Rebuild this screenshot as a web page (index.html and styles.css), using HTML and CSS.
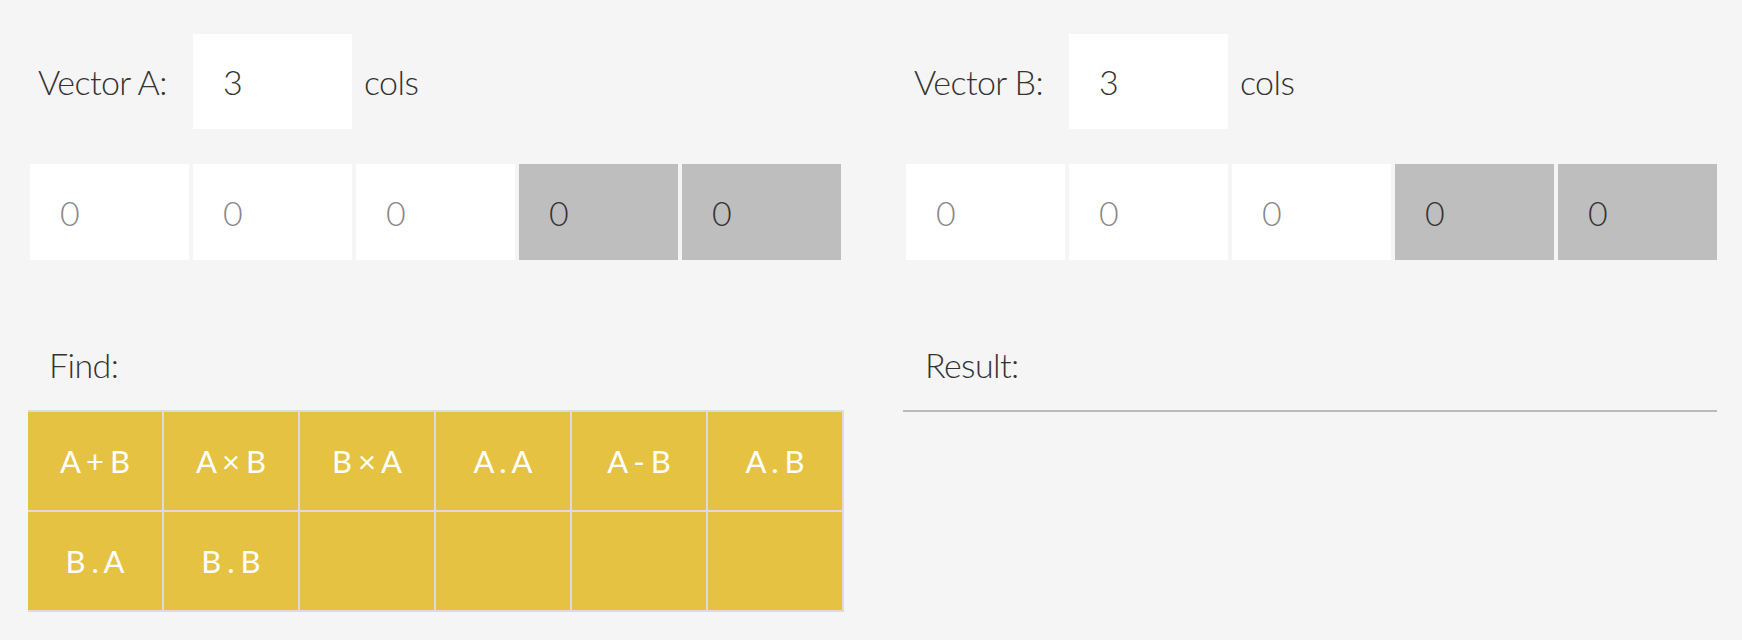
FILE: index.html
```html
<!DOCTYPE html>
<html>
<head>
<meta charset="utf-8">
<link rel="stylesheet" href="styles.css">
</head>
<body>
<div class="page">
  <div class="top">
    <section class="vector">
      <div class="size-row">
        <span class="label">Vector A:</span>
        <div class="size-input">3</div>
        <span class="unit">cols</span>
      </div>
      <div class="cells">
        <div class="cell">0</div>
        <div class="cell">0</div>
        <div class="cell">0</div>
        <div class="cell off">0</div>
        <div class="cell off">0</div>
      </div>
    </section>
    <section class="vector">
      <div class="size-row">
        <span class="label">Vector B:</span>
        <div class="size-input">3</div>
        <span class="unit">cols</span>
      </div>
      <div class="cells">
        <div class="cell">0</div>
        <div class="cell">0</div>
        <div class="cell">0</div>
        <div class="cell off">0</div>
        <div class="cell off">0</div>
      </div>
    </section>
  </div>
  <div class="bottom">
    <section class="find">
      <div class="heading">Find:</div>
      <div class="ops">
        <div class="op">A + B</div>
        <div class="op">A × B</div>
        <div class="op">B × A</div>
        <div class="op">A . A</div>
        <div class="op">A - B</div>
        <div class="op">A . B</div>
        <div class="op">B . A</div>
        <div class="op">B . B</div>
        <div class="op"></div>
        <div class="op"></div>
        <div class="op"></div>
        <div class="op"></div>
      </div>
    </section>
    <section class="result">
      <div class="heading">Result:</div>
      <div class="result-line"></div>
    </section>
  </div>
</div>
</body>
</html>
```
FILE: styles.css
```css
html, body {
  margin: 0;
  padding: 0;
  background: #f5f5f5;
}
body {
  font-family: Lato, "Open Sans", sans-serif;
  font-weight: 300;
  color: #333;
}
.page {
  padding: 34px 25px 0 30px;
}
.top, .bottom {
  display: grid;
  grid-template-columns: 811px 811px;
  column-gap: 65px;
}
.size-row {
  display: flex;
  align-items: center;
  height: 95px;
}
.label {
  width: 155px;
  padding-left: 8px;
  font-size: 34px;
  letter-spacing: -0.6px;
  color: #333;
}
.size-input {
  width: 129px;
  height: 95px;
  padding-left: 30px;
  background: #fff;
  display: flex;
  align-items: center;
  font-size: 34px;
  color: #333;
}
.unit {
  margin-left: 12px;
  font-size: 34px;
  letter-spacing: -0.6px;
  color: #333;
}
.cells {
  display: flex;
  gap: 4px;
  margin-top: 35px;
}
.cell {
  width: 129px;
  height: 96px;
  padding-left: 30px;
  background: #fff;
  display: flex;
  align-items: center;
  font-size: 34px;
  color: #888;
}
.cell.off {
  background: #bebebe;
  color: #333;
}
.bottom {
  margin-top: 80px;
}
.heading {
  padding-left: 19px;
  height: 70px;
  font-size: 34px;
  letter-spacing: -0.6px;
  color: #333;
  line-height: 50px;
}
.ops {
  display: grid;
  grid-template-columns: repeat(6, 1fr);
  grid-auto-rows: 98px;
  width: 816px;
  margin-left: -2px;
  background: #dcdcdc;
  gap: 2px;
  padding: 2px 0 2px 0;
  box-sizing: border-box;
  border-right: 2px solid #dcdcdc;
}
.op {
  background: #e5c242;
  color: #fff;
  font-size: 31px;
  font-weight: 400;
  letter-spacing: 0;
  word-spacing: -2px;
  display: flex;
  align-items: center;
  justify-content: center;
}
.result-line {
  margin-left: -3px;
  margin-top: 0;
  height: 2px;
  background: #bbb;
}
```
